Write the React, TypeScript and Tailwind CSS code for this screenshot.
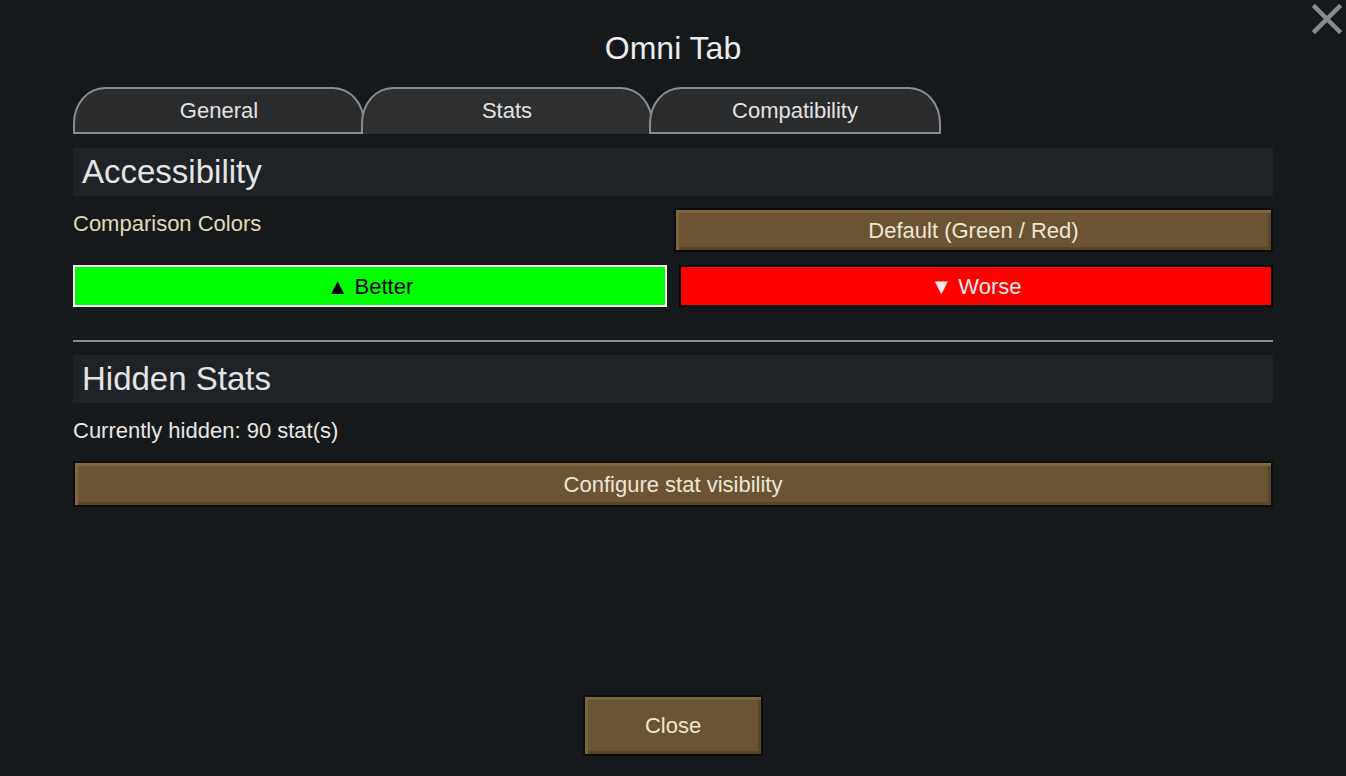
const FONT = { fontFamily: '"Liberation Sans", Arial, sans-serif' };

const TABS = [
  { label: "General", active: false },
  { label: "Stats", active: true },
  { label: "Compatibility", active: false },
];

function WoodButton({ label, className = "" }: { label: string; className?: string }) {
  return (
    <button
      className={`flex items-center justify-center border-2 border-[#0c0c0c] bg-[#6b5433] text-[22px] text-[#ece6d6] shadow-[inset_3px_3px_0_#7d6639,inset_-3px_-3px_0_#5a4527] ${className}`}
    >
      {label}
    </button>
  );
}

function SectionHeader({ title }: { title: string }) {
  return (
    <div className="flex h-[48px] items-center bg-[#1f2226] px-[9px] text-[33px] text-[#e4e4e4]">
      {title}
    </div>
  );
}

export default function App() {
  return (
    <div className="relative flex h-[776px] w-full flex-col bg-[#16191c] px-[73px] text-[#e0e0e0]" style={FONT}>
      <button className="absolute right-[3px] top-[3px] p-[1px]">
        <svg width="30" height="30" viewBox="0 0 30 30">
          <path d="M3 3 L27 27 M27 3 L3 27" stroke="#8a8a8a" strokeWidth="4.5" strokeLinecap="square" />
        </svg>
      </button>

      <div className="mt-[28px] text-center text-[32px] leading-[40px] text-[#ececec]">Omni Tab</div>

      <div className="mt-[19px] flex h-[47px]">
        {TABS.map((t, i) => (
          <div
            key={t.label}
            className={`relative flex w-[292px] items-center justify-center rounded-t-[32px_36px] border-2 border-[#8c8c8c] text-[22px] text-[#e2e2e2] ${
              i > 0 ? "-ml-[4px]" : ""
            } ${t.active ? "border-b-0 bg-[#2e2f31] pb-[2px]" : "bg-[#2a2b2d]"}`}
          >
            {t.label}
          </div>
        ))}
      </div>

      <div className="mt-[14px]">
        <SectionHeader title="Accessibility" />
      </div>

      <div className="mt-[12px] flex items-start">
        <div className="mt-[4px] flex-1 text-[22px] leading-[24px] text-[#e0d9b6]">Comparison Colors</div>
        <WoodButton label="Default (Green / Red)" className="h-[44px] w-[599px]" />
      </div>

      <div className="mt-[13px] grid h-[42px] grid-cols-2 gap-[12px] text-[22px]">
        <div className="flex items-center justify-center border-2 border-white bg-[#00ff00] text-black">▲ Better</div>
        <div className="flex items-center justify-center border-2 border-black bg-[#ff0000] text-[#f4eaea]">▼ Worse</div>
      </div>

      <div className="mt-[33px] h-[2px] bg-[#8b8b8b]" />

      <div className="mt-[13px]">
        <SectionHeader title="Hidden Stats" />
      </div>

      <div className="mt-[16px] text-[22px] leading-[24px] text-[#e6e6e6]">Currently hidden: 90 stat(s)</div>

      <WoodButton label="Configure stat visibility" className="mt-[18px] h-[46px] w-full" />

      <div className="flex-1" />

      <div className="mb-[20px] flex justify-center">
        <WoodButton label="Close" className="h-[61px] w-[180px]" />
      </div>
    </div>
  );
}
